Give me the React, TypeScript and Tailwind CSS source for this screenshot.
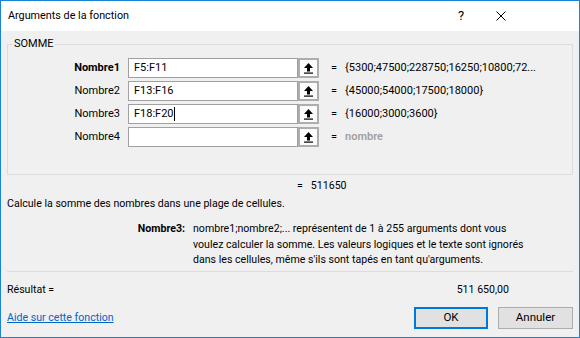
import React from 'react';

const rows = [
  { label: 'Nombre1', value: 'F5:F11', result: '{5300;47500;228750;16250;10800;72...', bold: true },
  { label: 'Nombre2', value: 'F13:F16', result: '{45000;54000;17500;18000}' },
  { label: 'Nombre3', value: 'F18:F20', result: '{16000;3000;3600}', caret: true },
  { label: 'Nombre4', value: '', result: 'nombre', placeholder: true },
];

const RefButton = () => (
  <div className="w-[21px] h-[20px] border-2 border-[#adadad] bg-[#fbfbfb] flex items-center justify-center">
    <svg width="11" height="12" viewBox="0 0 11 12">
      <path d="M5.5 1 L10 6 L7 6 L7 9.5 L4 9.5 L4 6 L1 6 Z" fill="#000" />
      <rect x="1" y="10.5" width="9" height="1.2" fill="#000" />
    </svg>
  </div>
);

export default function App() {
  return (
    <div
      className="w-[580px] h-[338px] border border-[#1883d7] bg-[#f0f0f0] flex flex-col text-[10.6px] text-black overflow-hidden"
      style={{ fontFamily: 'Roboto, "Noto Sans", sans-serif' }}
    >
      {/* title bar */}
      <div className="h-[30px] bg-white flex items-center pl-[7px] shrink-0">
        <span className="flex-1 text-[10.8px]">Arguments de la fonction</span>
        <span className="w-[20px] text-center text-[13px]">?</span>
        <div className="ml-[20px] w-[20px] h-[30px] flex items-center justify-center mr-[68px]">
          <svg width="10" height="10" viewBox="0 0 10 10">
            <path d="M0.5 0.5 L9.5 9.5 M9.5 0.5 L0.5 9.5" stroke="#000" strokeWidth="1" />
          </svg>
        </div>
      </div>

      <div className="flex flex-col px-[6px]">
        <fieldset className="mt-[5px] border border-[#dcdcdc] pl-[1px] pt-[6px] pb-[27px]">
          <legend className="ml-[4px] px-[1px] leading-[16px] text-[11px]">SOMME</legend>
          <div className="flex flex-col gap-[3px] text-[11px]">
            {rows.map((r) => (
              <div key={r.label} className="flex items-center h-[20px]">
                <div className={`w-[111px] shrink-0 text-right ${r.bold ? 'font-bold' : ''}`}>{r.label}</div>
                <div className="ml-[8px] w-[170px] shrink-0 h-[20px] border border-[#a0a0a0] bg-white flex items-center pl-[5px]">
                  <span>{r.value}</span>
                  {r.caret && <span className="w-px h-[14px] bg-black" />}
                </div>
                <RefButton />
                <span className="ml-[12px]">=</span>
                <span className={`ml-[8px] whitespace-nowrap ${r.placeholder ? 'text-[#a0a0a0] font-semibold' : ''}`}>
                  {r.result}
                </span>
              </div>
            ))}
          </div>
        </fieldset>

        <div className="mt-[2px] h-[18px] leading-[18px] flex">
          <span className="ml-[290px]">=</span>
          <span className="ml-[8px]">511650</span>
        </div>
        <div className="h-[18px] leading-[18px]">Calcule la somme des nombres dans une plage de cellules.</div>

        <div className="mt-[8px] flex leading-[15.5px]">
          <div className="w-[178px] shrink-0 text-right font-bold">Nombre3:</div>
          <div className="ml-[8px] shrink-0 whitespace-nowrap">
            nombre1;nombre2;... représentent de 1 à 255 arguments dont vous
            <br />
            voulez calculer la somme. Les valeurs logiques et le texte sont ignorés
            <br />
            dans les cellules, même s'ils sont tapés en tant qu'arguments.
          </div>
        </div>

        <div className="mt-[3px] h-px bg-[#dcdcdc]" />

        <div className="mt-[9px] h-[18px] leading-[18px] flex justify-between">
          <span>Résultat =</span>
          <span className="mr-[64px]">511 650,00</span>
        </div>

        <div className="mt-[8px] h-[22px] flex items-center">
          <a className="flex-1 text-[#0066cc] underline">Aide sur cette fonction</a>
          <button className="w-[74px] h-[22px] border-2 border-[#0078d7] bg-[#e1e1e1] text-[11.5px]">OK</button>
          <button className="ml-[10px] w-[75px] h-[22px] border border-[#adadad] bg-[#e1e1e1] text-[11.5px]">Annuler</button>
        </div>
      </div>
    </div>
  );
}
